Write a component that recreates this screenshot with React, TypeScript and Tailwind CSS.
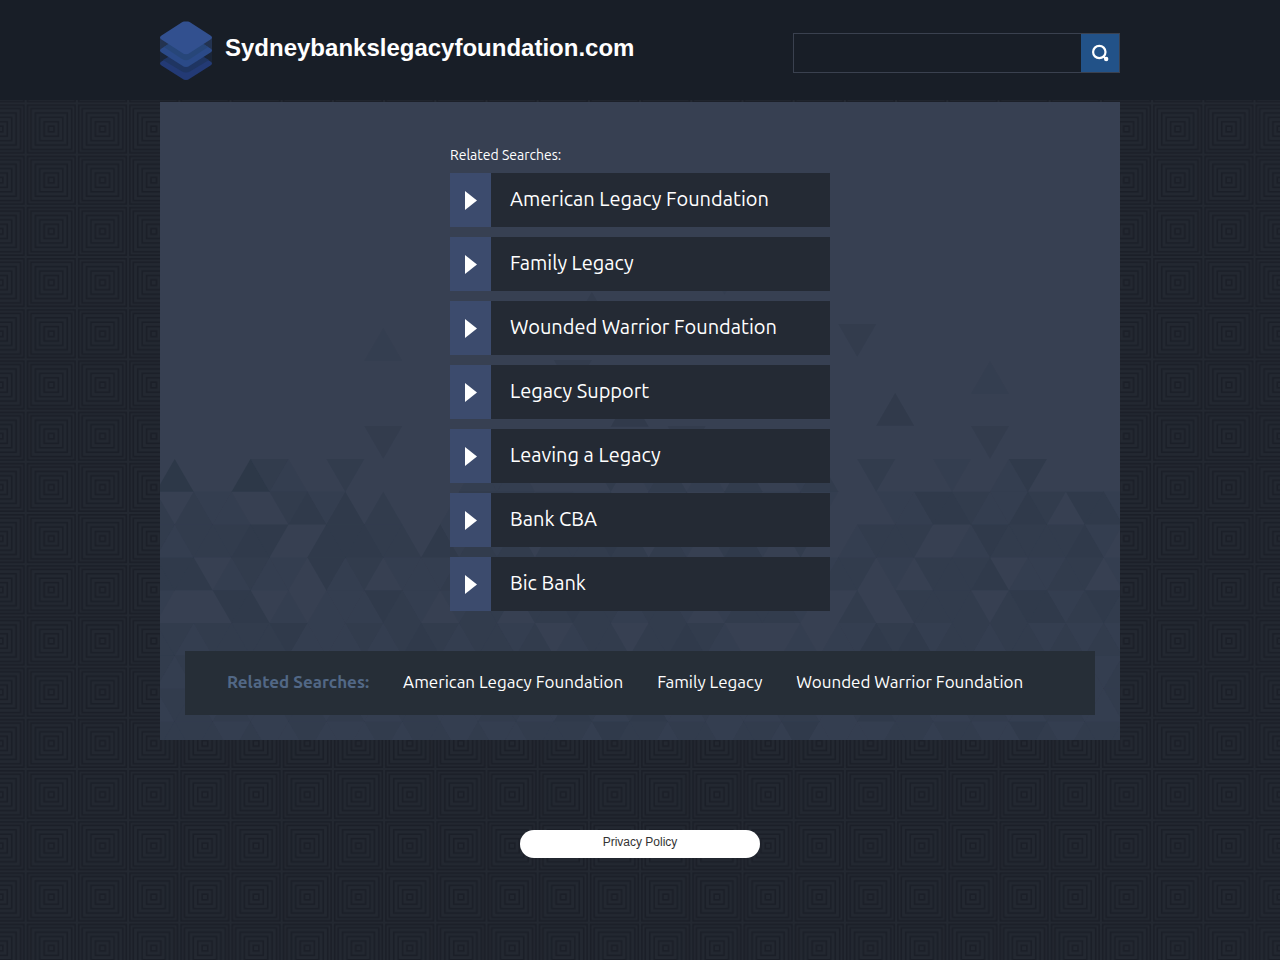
import { useId } from 'react';

const LINKS = [
  'American Legacy Foundation',
  'Family Legacy',
  'Wounded Warrior Foundation',
  'Legacy Support',
  'Leaving a Legacy',
  'Bank CBA',
  'Bic Bank',
];

const STEP = 18.96;
const ROW = 32.8;
const SHADES = [0, 0.22, 0.42, 0.62, 0.85];

// Shade of each triangle in the left, middle and right part of every row.
const ROWS = [
  ['04000421002000000', '111000020120102001', '20020001001300000'],
  ['20211002313020001', '212021120213012012', '10001133211320331'],
  ['21222330033322031', '212022232021023102', '00122200132222310'],
  ['33301211031201112', '213021201320213120', '12201022230112201'],
  ['10003301011132101', '220223221221012221', '00200222202331232'],
  ['22122223111212321', '221201220223210001', '01132312212212121'],
  ['21222121212212211', '221122112211221122', '11212211211212112'],
  ['12212112212112211', '122113212311211122', '11232211221122112'],
  ['22221211211121221', '211222132212212213', '11112212211321222'],
].map((parts) => parts.join(''));

// Loose triangles above the mosaic: [column, top, points up, shade].
const LOOSE: [number, number, boolean, number][] = [
  [11, 226, true, 1],
  [11, 324, false, 2],
  [36, 222, false, 2],
  [43, 259, true, 1],
  [38, 291, true, 3],
  [43, 324, false, 2],
  [22, 190, true, 2],
  [29, 160, false, 1],
  [21, 258, false, 2],
  [24, 292, true, 3],
  [27, 324, false, 2],
];

function triangle(column: number, top: number, up: boolean) {
  const x = 14.7 + STEP * column;
  const tip = up ? top : top + ROW;
  const base = up ? top + ROW : top;
  return `${x},${tip} ${x - STEP},${base} ${x + STEP},${base}`;
}

function Mosaic() {
  return (
    <svg className="absolute inset-0 h-full w-full" viewBox="0 0 960 638" preserveAspectRatio="xMidYMax slice" aria-hidden="true">
      {LOOSE.map(([column, top, up, shade]) => (
        <polygon key={`${column}-${top}`} points={triangle(column, top, up)} fill="#2d3747" opacity={SHADES[shade]} />
      ))}
      {ROWS.map((row, r) =>
        row.split('').map((shade, i) => {
          const column = i - 1;
          const up = (column + r) % 2 === 0;
          return shade === '0' ? null : (
            <polygon key={`${r}-${i}`} points={triangle(column, 357 + ROW * r, up)} fill="#2c3747" opacity={SHADES[Number(shade)]} />
          );
        }),
      )}
    </svg>
  );
}

function SquaresPattern() {
  const id = useId();
  return (
    <svg className="absolute inset-0 h-full w-full" aria-hidden="true">
      <defs>
        <pattern id={id} width="51.2" height="51.2" x="25.7" y="103.4" patternUnits="userSpaceOnUse">
          <rect width="51.2" height="51.2" fill="#232831" />
          <g fill="none" stroke="#1b1f28" strokeWidth="1.7">
            <rect x="1.8" y="1.8" width="47.6" height="47.6" />
            <rect x="5.2" y="5.2" width="40.8" height="40.8" />
            <rect x="9.6" y="9.6" width="32" height="32" />
            <rect x="14" y="14" width="23.2" height="23.2" />
            <rect x="18.4" y="18.4" width="14.4" height="14.4" />
            <rect x="22.8" y="22.8" width="5.6" height="5.6" />
          </g>
        </pattern>
      </defs>
      <rect width="100%" height="100%" fill={`url(#${id})`} />
    </svg>
  );
}

function Logo() {
  return (
    <svg className="h-[60px] w-[52px] shrink-0" viewBox="0 0 52 60" aria-hidden="true">
      <path d="M0 16v14l26 17 26-17V16z" fill="#233350" />
      <path d="M0 30v12l26 16 26-16V30z" fill="#1a2538" />
      <path d="M1.500 40.500 23 27q3-1.500 6 0l21.500 13.500q3 2 0 4L30 57.500q-4 3-8 0L1.500 44.500q-3-2 0-4z" fill="#233a75" />
      <path d="M3 39 22 50.500q4 2 8 0L49 39 26 26z" fill="#1f3562" />
      <path d="M1.500 27.500 23 14q3-1.500 6 0l21.500 13.500q3 2 0 4L30 44.500q-4 3-8 0L1.500 31.500q-3-2 0-4z" fill="#2b4a88" />
      <path d="M4 26 22 38q4 2.500 8 0l18-12-22-14z" fill="#274679" />
      <path d="M1.500 14.500 22 1.200q1-.7 2-.7h4q1 0 2 .7l20.500 13.300q3 2 0 4L30 31.700q-4 3-8 0L1.500 18.500q-3-2 0-4z" fill="#32508f" />
    </svg>
  );
}

export default function App() {
  return (
    <div className="relative flex min-h-screen flex-col bg-[#20252e] font-['Ubuntu','Noto_Sans',sans-serif] text-white">
      <SquaresPattern />
      <header className="relative bg-[#181e27]">
        <div className="mx-auto flex h-[100px] max-w-[960px] items-center justify-between pt-[2px]">
          <div className="flex items-center gap-[13px]">
            <Logo />
            <h1 className="pb-[6px] font-['Liberation_Sans',Arial,sans-serif] text-2xl font-bold">Sydneybankslegacyfoundation.com</h1>
          </div>
          <form className="mt-1 flex h-10 w-[327px] border border-[#3a414f]" role="search" onSubmit={(e) => e.preventDefault()}>
            <input type="text" aria-label="Search" className="min-w-0 flex-1 bg-transparent px-3 text-base text-white outline-none" />
            <button type="submit" aria-label="Submit search" className="flex w-[38px] items-center justify-center bg-[#225288]">
              <svg className="h-[18px] w-[18px]" viewBox="0 0 18 18" fill="none" stroke="#fff" aria-hidden="true">
                <circle cx="8.300" cy="8" r="6.200" strokeWidth="2.200" />
                <path d="m12.500 12.500 2.200 2.200" strokeWidth="2" />
                <circle cx="15.200" cy="15" r="2.200" fill="#fff" stroke="none" />
              </svg>
            </button>
          </form>
        </div>
      </header>

      <main className="relative mx-auto mt-[2px] w-full max-w-[960px] overflow-hidden bg-[#374052] px-[25px] pt-[42px] pb-[25px]">
        <Mosaic />
        <div className="relative mx-auto max-w-[380px]">
          <h2 className="text-[14px] leading-[22px]">Related Searches:</h2>
          <ul className="mt-[7px] flex flex-col gap-[10px]">
            {LINKS.map((label) => (
              <li key={label}>
                <a href="#" className="flex h-[54px] bg-[#242a34]">
                  <span className="flex w-[41px] items-center justify-center bg-[#3c4b6d]">
                    <svg className="h-[19px] w-3" viewBox="0 0 12 19" aria-hidden="true">
                      <path d="M0 0v19l12-9.500z" fill="#fff" />
                    </svg>
                  </span>
                  <span className="pl-[19px] text-[20px] leading-[52px]">{label}</span>
                </a>
              </li>
            ))}
          </ul>
        </div>
        <div className="relative mt-10 flex h-16 items-center gap-[34px] bg-[#262e37] px-[42px] pb-[2px]">
          <h2 className="text-[17px] font-bold text-[#526886]">Related Searches:</h2>
          <ul className="flex gap-[34px] text-[17px]">
            {LINKS.slice(0, 3).map((label) => (
              <li key={label}>
                <a href="#">{label}</a>
              </li>
            ))}
          </ul>
        </div>
      </main>

      <footer className="relative mt-[90px] flex justify-center">
        <a href="#" className="h-7 w-60 rounded-full bg-white text-center font-['Liberation_Sans',Arial,sans-serif] text-xs leading-6 text-[#333]">
          Privacy Policy
        </a>
      </footer>
    </div>
  );
}
